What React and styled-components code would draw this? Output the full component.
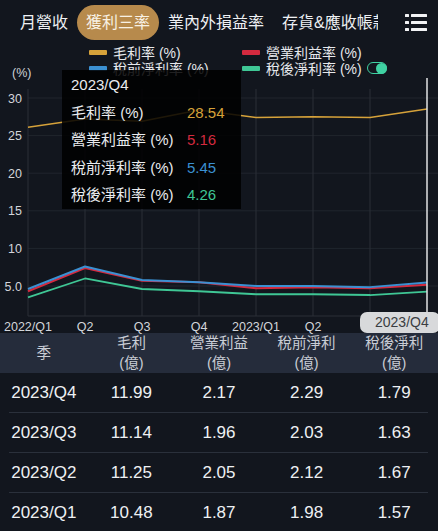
import React from "react";
import styled, { createGlobalStyle } from "styled-components";

const GlobalStyle = createGlobalStyle`
  html, body {
    margin: 0;
    padding: 0;
    background: #12161e;
  }
  body {
    font-family: "Liberation Sans", "Noto Sans CJK TC", sans-serif;
    color: #eceef2;
  }
`;

const COLORS = {
  gross: "#d6a23a",
  op: "#d42a3f",
  pre: "#3b90d2",
  post: "#3fc795",
};

const tabs = ["月營收", "獲利三率", "業內外損益率", "存貨&應收帳款週轉"];

// last label sits under the cursor badge, so it is not drawn on the axis
const quarters = ["2022/Q1", "Q2", "Q3", "Q4", "2023/Q1", "Q2"];

const series = [
  { key: "gross", width: 1.5, data: [26.1, 27.2, 26.9, 28.4, 27.4, 27.5, 27.4, 28.54] },
  { key: "post", width: 1.8, data: [3.5, 6.0, 4.6, 4.3, 3.9, 3.9, 3.8, 4.26] },
  { key: "op", width: 2, data: [4.3, 7.4, 5.7, 5.5, 4.7, 4.85, 4.7, 5.16] },
  { key: "pre", width: 2, data: [4.6, 7.6, 5.8, 5.5, 5.0, 5.0, 4.85, 5.45] },
];

const legend = [
  { key: "gross", label: "毛利率 (%)" },
  { key: "op", label: "營業利益率 (%)" },
  { key: "pre", label: "稅前淨利率 (%)" },
  { key: "post", label: "稅後淨利率 (%)", toggle: true },
];

const tooltip = [
  { key: "gross", label: "毛利率 (%)", value: "28.54" },
  { key: "op", label: "營業利益率 (%)", value: "5.16" },
  { key: "pre", label: "稅前淨利率 (%)", value: "5.45" },
  { key: "post", label: "稅後淨利率 (%)", value: "4.26" },
];

const columns = [
  ["季"],
  ["毛利", "(億)"],
  ["營業利益", "(億)"],
  ["稅前淨利", "(億)"],
  ["稅後淨利", "(億)"],
];

const rows = [
  ["2023/Q4", "11.99", "2.17", "2.29", "1.79"],
  ["2023/Q3", "11.14", "1.96", "2.03", "1.63"],
  ["2023/Q2", "11.25", "2.05", "2.12", "1.67"],
  ["2023/Q1", "10.48", "1.87", "1.98", "1.57"],
];

// chart geometry (svg coords, svg starts at page y 76)
const X0 = 28;
const STEP = 57;
const toX = (i) => X0 + i * STEP;
const toY = (v) => 22 + (30 - v) * 7.52;
const PLOT_TOP = 13;
const PLOT_BOTTOM = 240;

const Page = styled.div`
  width: 438px;
  height: 531px;
  overflow: hidden;
  background: #12161e;
`;

const TabBar = styled.div`
  height: 44px;
  display: flex;
  align-items: center;
`;

const TabScroller = styled.div`
  flex: 1;
  min-width: 0;
  display: flex;
  align-items: center;
  padding-left: 11px;
  overflow: hidden;
  white-space: nowrap;
`;

const Tab = styled.div`
  flex: none;
  height: 35px;
  line-height: 35px;
  padding: 0 9px;
  border-radius: 18px;
  font-size: 16px;
  color: ${({ $active }) => ($active ? "#f8f1e4" : "#eef0f3")};
  background: ${({ $active }) => ($active ? "#b78a4c" : "transparent")};
`;

const MenuButton = styled.div`
  flex: none;
  width: 60px;
  height: 44px;
  display: flex;
  align-items: center;
  justify-content: flex-end;
  padding-right: 11px;
  box-sizing: border-box;
`;

const ChartSection = styled.div`
  position: relative;
  height: 289px;
`;

const Legend = styled.div`
  display: grid;
  grid-template-columns: 153px auto;
  padding-left: 89px;
  height: 32px;
`;

const LegendItem = styled.div`
  display: flex;
  align-items: center;
  height: 16px;
  font-size: 14px;
  color: #e6e8ec;
  white-space: nowrap;
`;

const Swatch = styled.span`
  width: 18px;
  height: 5px;
  border-radius: 1px;
  margin-right: 6px;
  background: ${({ $color }) => $color};
`;

const Toggle = styled.span`
  display: inline-flex;
  justify-content: flex-end;
  align-items: center;
  width: 20px;
  height: 12px;
  margin-left: 5px;
  border: 1.5px solid #3fd1a2;
  border-radius: 7px;
  box-sizing: border-box;
  &::after {
    content: "";
    width: 11px;
    height: 11px;
    margin-right: -1.5px;
    border-radius: 50%;
    background: #3fd1a2;
  }
`;

const ChartSvg = styled.svg`
  display: block;
  overflow: visible;
  font-family: "Liberation Sans", sans-serif;
`;

const Tooltip = styled.div`
  position: absolute;
  left: 62px;
  top: 26px;
  width: 179px;
  height: 139px;
  box-sizing: border-box;
  padding: 1px 9px 0;
  background: rgba(0, 0, 0, 0.86);
  font-size: 15px;
  color: #e9ebee;
`;

const TipTitle = styled.div`
  line-height: 27.5px;
`;

const TipRow = styled.div`
  display: grid;
  grid-template-columns: 116px auto;
  line-height: 27.5px;
  white-space: nowrap;
`;

const TipValue = styled.span`
  color: ${({ $color }) => $color};
`;

const CursorLabel = styled.div`
  position: absolute;
  left: 360px;
  top: 268px;
  width: 80px;
  height: 21px;
  border-radius: 7px;
  background: #d8d9db;
  color: #3a3d42;
  font-size: 14px;
  line-height: 21px;
  padding-left: 15px;
  box-sizing: border-box;
`;

const Table = styled.div`
  display: flex;
  flex-direction: column;
`;

const HeaderRow = styled.div`
  display: grid;
  grid-template-columns: repeat(5, 1fr);
  height: 40px;
  background: #252c3b;
`;

const HeaderCell = styled.div`
  display: flex;
  flex-direction: column;
  justify-content: center;
  align-items: center;
  font-size: 14.5px;
  line-height: 20px;
  color: #c9cdd5;
`;

const Row = styled.div`
  display: grid;
  grid-template-columns: repeat(5, 1fr);
  height: 39px;
  align-items: center;
`;

const Cell = styled.div`
  text-align: center;
  font-size: 17px;
  color: #eef0f3;
`;

const Divider = styled.div`
  height: 1px;
  margin: 0 10px 0 9px;
  background: #2a303b;
`;

const MenuIcon = () => (
  <svg width="22" height="18" viewBox="0 0 22 18">
    {[1, 8, 15].map((y) => (
      <g key={y} fill="#f2f3f5">
        <rect x="0" y={y} width="4" height="3" rx="0.5" />
        <rect x="6" y={y} width="16" height="3" rx="0.5" />
      </g>
    ))}
  </svg>
);

const Chart = () => {
  const grid = [30, 25, 20, 15, 10, 5];
  return (
    <ChartSvg width="438" height="257">
      <text x="12" y="0.5" fontSize="12.5" fill="#cfd2d7">(%)</text>
      {grid.map((v) => (
        <g key={v}>
          <line x1={X0} x2="438" y1={toY(v)} y2={toY(v)} stroke="#20252d" strokeWidth="1" />
          <text x="22" y={toY(v) + 4.5} fontSize="12.5" fill="#d2d5da" textAnchor="end">
            {v === 5 ? "5.0" : v}
          </text>
        </g>
      ))}
      {[0, 1, 2, 3, 4, 5, 6].map((i) => (
        <line
          key={i}
          x1={toX(i)}
          x2={toX(i)}
          y1={PLOT_TOP}
          y2={PLOT_BOTTOM}
          stroke="#2a2f37"
          strokeWidth="1"
        />
      ))}
      <line x1={X0} x2="438" y1={PLOT_BOTTOM} y2={PLOT_BOTTOM} stroke="#2a2f37" />
      {series.map((s) => (
        <polyline
          key={s.key}
          points={s.data.map((v, i) => `${toX(i)},${toY(v)}`).join(" ")}
          fill="none"
          stroke={COLORS[s.key]}
          strokeWidth={s.width}
          strokeLinejoin="round"
        />
      ))}
      <line x1={toX(7)} x2={toX(7)} y1="2" y2="236" stroke="#e2e3e5" strokeWidth="1.5" />
      {quarters.map((q, i) => (
        <text
          key={i}
          x={toX(i)}
          y="255"
          fontSize="12.5"
          fill="#d2d5da"
          textAnchor="middle"
        >
          {q}
        </text>
      ))}
    </ChartSvg>
  );
};

export default function App() {
  return (
    <Page>
      <GlobalStyle />
      <TabBar>
        <TabScroller>
          {tabs.map((t, i) => (
            <Tab key={t} $active={i === 1}>
              {t}
            </Tab>
          ))}
        </TabScroller>
        <MenuButton>
          <MenuIcon />
        </MenuButton>
      </TabBar>

      <ChartSection>
        <Legend>
          {legend.map((l) => (
            <LegendItem key={l.key}>
              <Swatch $color={COLORS[l.key]} />
              {l.label}
              {l.toggle && <Toggle />}
            </LegendItem>
          ))}
        </Legend>
        <Chart />
        <Tooltip>
          <TipTitle>2023/Q4</TipTitle>
          {tooltip.map((t) => (
            <TipRow key={t.key}>
              <span>{t.label}</span>
              <TipValue $color={COLORS[t.key]}>{t.value}</TipValue>
            </TipRow>
          ))}
        </Tooltip>
        <CursorLabel>2023/Q4</CursorLabel>
      </ChartSection>

      <Table>
        <HeaderRow>
          {columns.map((c) => (
            <HeaderCell key={c[0]}>
              {c.map((line) => (
                <span key={line}>{line}</span>
              ))}
            </HeaderCell>
          ))}
        </HeaderRow>
        {rows.map((r, i) => (
          <React.Fragment key={r[0]}>
            {i > 0 && <Divider />}
            <Row>
              {r.map((v, j) => (
                <Cell key={j}>{v}</Cell>
              ))}
            </Row>
          </React.Fragment>
        ))}
      </Table>
    </Page>
  );
}
